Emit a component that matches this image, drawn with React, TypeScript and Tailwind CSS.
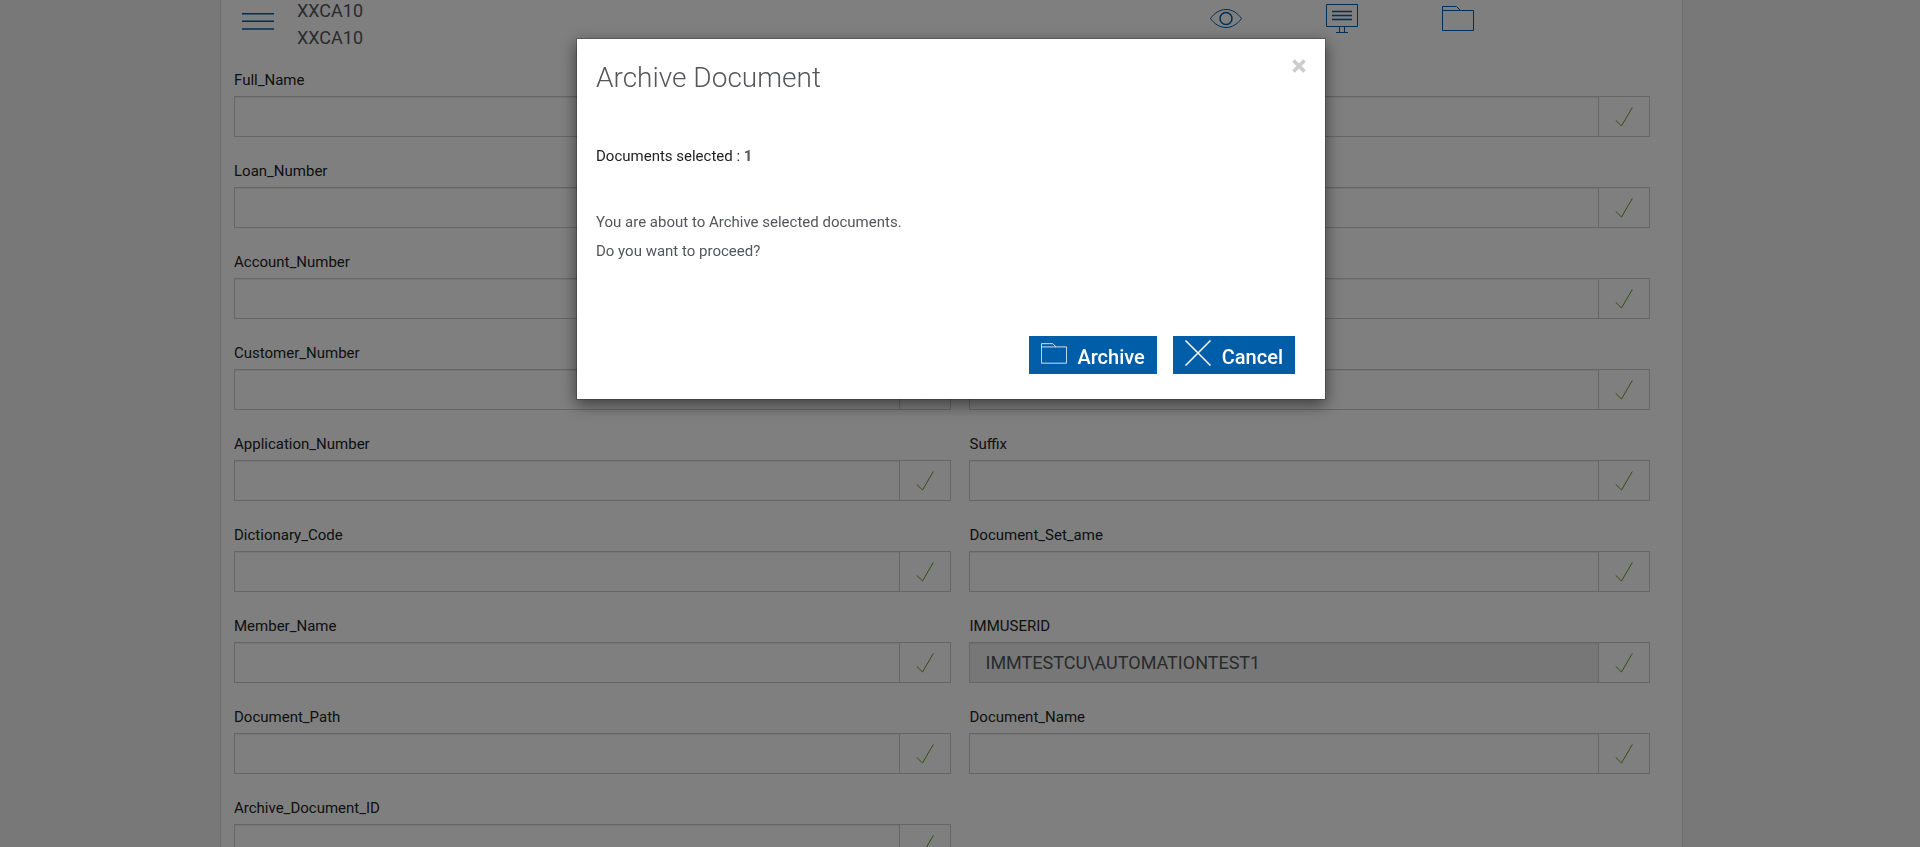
import React, { useState } from 'react';

type Field = {
  name: string;
  value?: string;
  readOnly?: boolean;
};

const FIELDS: Field[] = [
  { name: 'Full_Name' },
  { name: 'Share_Number' },
  { name: 'Loan_Number' },
  { name: 'Share_Suffix' },
  { name: 'Account_Number' },
  { name: 'Account_Type' },
  { name: 'Customer_Number' },
  { name: 'Branch' },
  { name: 'Application_Number' },
  { name: 'Suffix' },
  { name: 'Dictionary_Code' },
  { name: 'Document_Set_ame' },
  { name: 'Member_Name' },
  { name: 'IMMUSERID', value: 'IMMTESTCU\\AUTOMATIONTEST1', readOnly: true },
  { name: 'Document_Path' },
  { name: 'Document_Name' },
  { name: 'Archive_Document_ID' },
];

function MenuIcon() {
  return (
    <svg width="32" height="18" viewBox="0 0 32 18" fill="none" stroke="#005da8" strokeWidth="1.6" aria-hidden="true">
      <path d="M0 1.800h32M0 9.300h32M0 17h32" />
    </svg>
  );
}

function EyeIcon() {
  return (
    <svg width="32" height="32" viewBox="0 0 32 32" fill="none" stroke="#005da8" aria-hidden="true">
      <path d="M.5 16.500C9 4.500 23 4.500 31.500 16.500C23 28.500 9 28.500 .5 16.500z" />
      <circle cx="16" cy="16.500" r="6" strokeWidth="1.500" />
    </svg>
  );
}

function MonitorIcon() {
  return (
    <svg width="32" height="32" viewBox="0 0 32 32" fill="none" stroke="#005da8" aria-hidden="true">
      <path d="M.5 2.500h31v22H.5zM13.500 24.500v6M18.500 24.500v6M10 30.500h12" />
      <path d="M6 9.500h20M6 13.500h20M6 17.500h20" strokeWidth="1.500" />
    </svg>
  );
}

function FolderIcon({ className }: { className: string }) {
  return (
    <svg className={className} viewBox="0 0 32 32" fill="none" stroke="currentColor" aria-hidden="true">
      <path d="M.5 28.500v-24h14l4 4h13v20zM.5 8.500h18" />
    </svg>
  );
}

function CheckIcon() {
  return (
    <svg width="18" height="20" viewBox="0 0 18 20" fill="none" stroke="#6c9a1f" aria-hidden="true">
      <path d="M.7 13.300L6.500 19L17.300.5" />
    </svg>
  );
}

function FieldRow({ field }: { field: Field }) {
  const [value, setValue] = useState(field.value || '');
  return (
    <div className="flex flex-col h-[91px]">
      <label htmlFor={field.name} className="text-[15px] leading-6 text-[#222]">{field.name}</label>
      <div className="mt-1 flex h-[41px] border border-[#ccc]">
        <input
          id={field.name}
          value={value}
          readOnly={field.readOnly}
          onChange={e => setValue(e.target.value)}
          className="min-w-0 flex-1 px-[15px] text-[18px] text-[#555] shadow-[inset_0_1px_1px_rgba(0,0,0,0.075)] outline-none read-only:bg-[#eee]"
        />
        <button aria-label={`Accept ${field.name}`} className="flex w-[51px] items-center justify-center border-l border-[#ccc]">
          <CheckIcon />
        </button>
      </div>
    </div>
  );
}

function ArchiveDialog({ onClose }: { onClose: () => void }) {
  return (
    <div className="fixed inset-0 flex items-start justify-center bg-black/50 pt-[38px] pr-[18px]">
      <div
        role="dialog"
        aria-modal="true"
        aria-labelledby="archive-title"
        className="w-[750px] border border-black/20 bg-white bg-clip-padding px-[19px] pb-[25px] text-[15px] text-[#54565b] shadow-[0_5px_15px_rgba(0,0,0,0.5)]"
      >
        <div className="flex items-start justify-between pt-4">
          <h4 id="archive-title" className="pt-[5px] text-[28px] leading-9 font-light">Archive Document</h4>
          <button onClick={onClose} aria-label="Close" className="flex h-[22px] w-[14px] items-center justify-center text-[#ccc]">
            <svg width="14" height="14" viewBox="0 0 14 14" stroke="currentColor" strokeWidth="3.600" aria-hidden="true">
              <path d="M1.500 1.500l11 11M12.500 1.500l-11 11" />
            </svg>
          </button>
        </div>
        <p className="mt-[46px] leading-7 text-[#222]">
          Documents selected : <b className="text-[#54565b]">1</b>
        </p>
        <div className="mt-[38px] leading-[29px]">
          <p>You are about to Archive selected documents.</p>
          <p>Do you want to proceed?</p>
        </div>
        <div className="mt-[70px] flex justify-end gap-4 pr-[11px] text-[20px] font-medium text-white">
          <button className="flex h-[38px] items-center bg-[#005da8] px-3">
            <FolderIcon className="mb-1 mr-[10px] size-[26px]" />
            <span className="pt-1">Archive</span>
          </button>
          <button onClick={onClose} className="flex h-[38px] items-center bg-[#005da8] px-3">
            <svg className="mb-1 mr-[11px] size-[26px]" viewBox="0 0 26 26" stroke="currentColor" strokeWidth="1.500" aria-hidden="true">
              <path d="M.5.5l25 25M25.500.5l-25 25" />
            </svg>
            <span className="pt-1">Cancel</span>
          </button>
        </div>
      </div>
    </div>
  );
}

export default function App() {
  const [open, setOpen] = useState(true);

  return (
    <div className="h-screen overflow-hidden bg-[#f0f0f0] pr-[17px] font-[Roboto,sans-serif]">
      <main className="mx-auto w-[77%] min-h-screen max-w-[1463px] border-x border-[#ddd] bg-white">
        <header className="flex h-[68px] items-start pl-[21px] pr-[208px]">
          <button aria-label="Menu" className="mt-3"><MenuIcon /></button>
          <div className="ml-[23px] flex-1 space-y-[6px] text-[18px] leading-[21px] text-[#54565b]">
            <p>XXCA10</p>
            <p>XXCA10</p>
          </div>
          <div className="mt-[2px] flex gap-[84px] text-[#005da8]">
            <button aria-label="View"><EyeIcon /></button>
            <button aria-label="Present"><MonitorIcon /></button>
            <button aria-label="Archive" onClick={() => setOpen(true)}><FolderIcon className="size-8" /></button>
          </div>
        </header>
        <form className="grid grid-cols-[718fr_681fr] gap-x-[18px] pl-[13px] pr-8" onSubmit={e => e.preventDefault()}>
          {FIELDS.map(f => <FieldRow key={f.name} field={f} />)}
        </form>
      </main>
      {open && <ArchiveDialog onClose={() => setOpen(false)} />}
    </div>
  );
}
